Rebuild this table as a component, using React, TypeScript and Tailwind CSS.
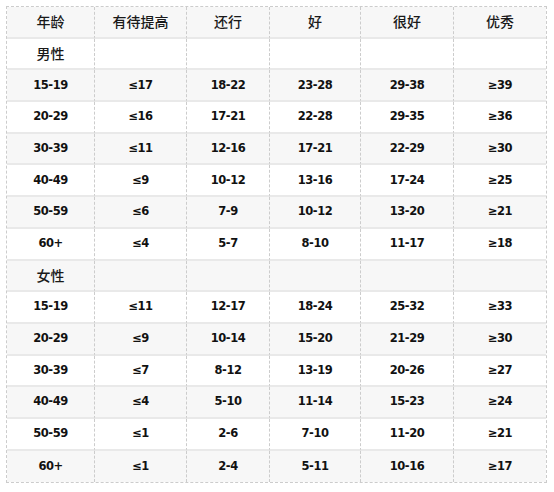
import React from "react";

const male = [
  ["15-19", "≤17", "18-22", "23-28", "29-38", "≥39"],
  ["20-29", "≤16", "17-21", "22-28", "29-35", "≥36"],
  ["30-39", "≤11", "12-16", "17-21", "22-29", "≥30"],
  ["40-49", "≤9", "10-12", "13-16", "17-24", "≥25"],
  ["50-59", "≤6", "7-9", "10-12", "13-20", "≥21"],
  ["60+", "≤4", "5-7", "8-10", "11-17", "≥18"],
];
const female = [
  ["15-19", "≤11", "12-17", "18-24", "25-32", "≥33"],
  ["20-29", "≤9", "10-14", "15-20", "21-29", "≥30"],
  ["30-39", "≤7", "8-12", "13-19", "20-26", "≥27"],
  ["40-49", "≤4", "5-10", "11-14", "15-23", "≥24"],
  ["50-59", "≤1", "2-6", "7-10", "11-20", "≥21"],
  ["60+", "≤1", "2-4", "5-11", "10-16", "≥17"],
];
const head = ["年龄", "有待提高", "还行", "好", "很好", "优秀"];

type Row = { kind: "head" | "group" | "data"; cells: string[] };

const rows: Row[] = [
  { kind: "head", cells: head },
  { kind: "group", cells: ["男性", "", "", "", "", ""] },
  ...male.map((c) => ({ kind: "data" as const, cells: c })),
  { kind: "group", cells: ["女性", "", "", "", "", ""] },
  ...female.map((c) => ({ kind: "data" as const, cells: c })),
];

export default function App() {
  return (
    <div className="w-[554px] h-[492px] bg-white pt-[6px] pl-[6px]">
      <table className="w-[539px] table-fixed border-separate border-spacing-0 border border-dashed border-[#cccccc]">
        <colgroup>
          <col className="w-[88px]" />
          <col className="w-[92px]" />
          <col className="w-[83px]" />
          <col className="w-[91px]" />
          <col className="w-[93px]" />
          <col className="w-[92px]" />
        </colgroup>
        <tbody>
          {rows.map((r, i) => {
            const last = i === rows.length - 1;
            const bg = i % 2 === 0 ? "bg-[#f7f7f7]" : "bg-white";
            return (
              <tr key={i} className={`h-[31.7px] ${bg}`}>
                {r.cells.map((c, j) => (
                  <td
                    key={j}
                    className={`p-0 text-center align-middle border-0 ${
                      j < 5 ? "border-r [border-right-style:dashed] border-r-[#cccccc]" : ""
                    } ${last ? "" : "border-b-2 [border-bottom-style:solid] border-b-[#e9e9e9]"} ${
                      r.kind === "data"
                        ? "font-['DejaVu_Sans',sans-serif] font-bold text-[11.5px] tracking-[-0.5px] text-[#111]"
                        : "font-['Noto_Sans_CJK_SC',sans-serif] font-medium text-[14px] text-[#1a1a1a]"
                    }`}
                  >
                    {c}
                  </td>
                ))}
              </tr>
            );
          })}
        </tbody>
      </table>
    </div>
  );
}
